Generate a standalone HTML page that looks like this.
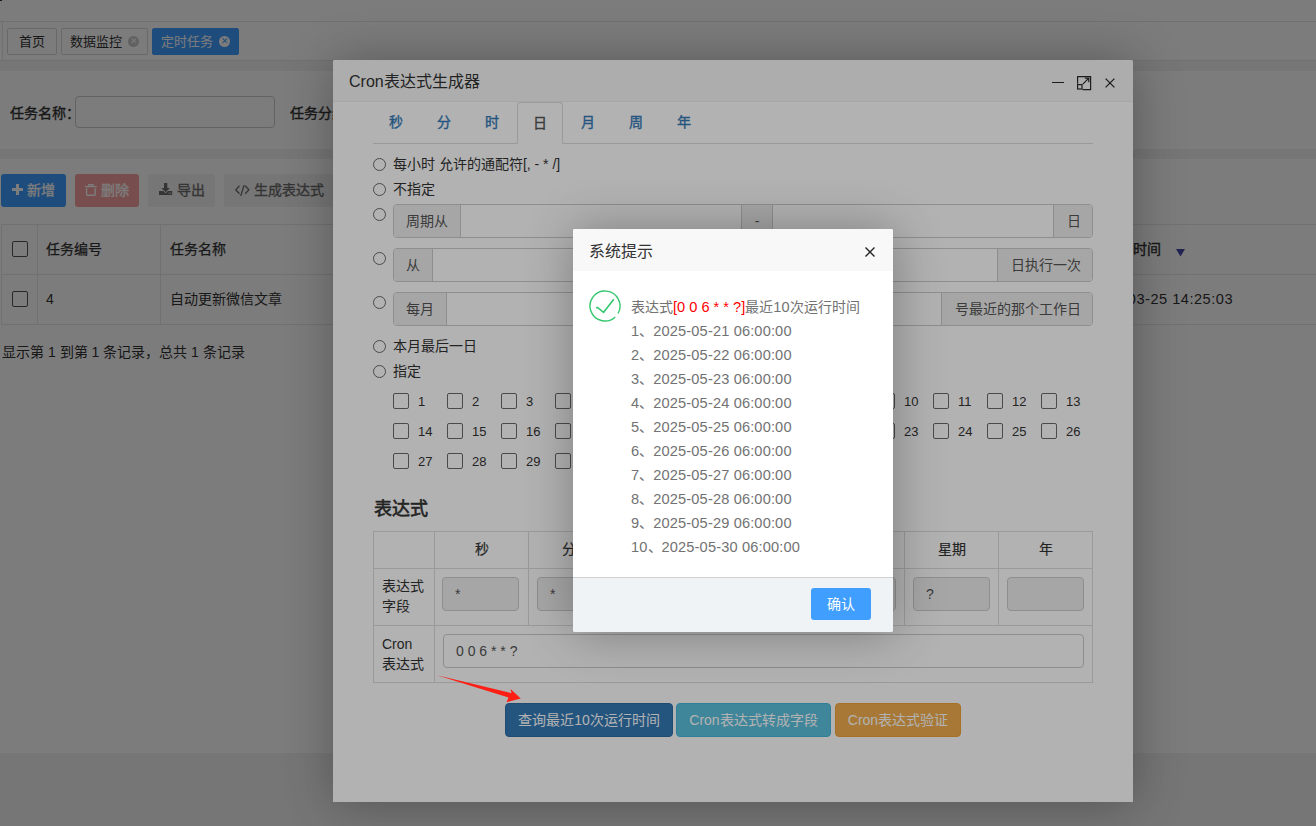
<!DOCTYPE html>
<html lang="zh-CN"><head><meta charset="utf-8">
<style>
*{box-sizing:border-box;margin:0;padding:0}
html,body{width:1316px;height:826px;overflow:hidden}
body{position:relative;font-family:"Liberation Sans",sans-serif;font-size:13px;color:#333;background:#f3f3f4}
.a{position:absolute}
.t{position:absolute;white-space:nowrap;line-height:20px}
/* page */
#top{left:0;top:0;width:1316px;height:21px;background:#fff}
#tabbar{left:0;top:21px;width:1316px;height:40px;background:#fff;border-top:1px solid #e7e7e7;border-bottom:1px solid #e7e7e7}
.tab{position:absolute;top:6px;height:27px;border:1px solid #d9d9d9;border-radius:2px;background:#fff;color:#333;font-size:13px;line-height:25px;padding-left:8px}
.tab.act{background:#409eff;border-color:#409eff;color:#fff}
.xc{position:absolute;top:7px;width:11px;height:11px;border-radius:50%;background:#c8c8c8;color:#fff;font-size:9px;line-height:11px;text-align:center}
.panel{position:absolute;left:0;width:1316px;background:#fff}
.btn{position:absolute;height:33px;border-radius:3px;color:#fff;font-size:14px;line-height:33px;-webkit-text-stroke:.35px currentColor}
.cb{position:absolute;width:16px;height:16px;border:1px solid #555;border-radius:2px;background:#fff}
/* overlays */
.shade{left:0;top:0;width:1316px;height:826px;background:rgba(0,0,0,.3)}
/* modal */
#modal{left:333px;top:60px;width:800px;height:742px;background:#fff;border-radius:2px 2px 0 0;box-shadow:1px 1px 50px rgba(0,0,0,.3)}
#mtitle{left:0;top:0;width:800px;height:42px;background:#f8f8f8;border-bottom:1px solid #f0f0f0;font-size:16px;line-height:42px;padding-left:16px;color:#333;border-radius:2px 2px 0 0}
.mtab{position:absolute;top:42px;height:42px;width:46px;text-align:center;line-height:41px;color:#337ab7;font-size:14px;-webkit-text-stroke:.35px currentColor}
.mtab.act{color:#555;border:1px solid #ddd;border-bottom-color:#fff;border-radius:4px 4px 0 0;background:#fff;height:42px}
.radio{position:absolute;left:40px;width:13px;height:13px;border:1px solid #6a6a6a;border-radius:50%;background:#fff}
.lbl{position:absolute;font-size:14px;color:#333;white-space:nowrap;line-height:20px}
.ig{position:absolute;left:60px;width:700px;height:34px;border:1px solid #ccc;border-radius:4px;background:#fff;overflow:hidden}
.add{position:absolute;top:0;height:32px;background:#eee;line-height:32px;text-align:center;font-size:14px;color:#555}
.ck{position:absolute;width:16px;height:16px;border:1px solid #6a6a6a;border-radius:2px;background:#fff}
.ckl{position:absolute;font-size:13px;color:#333;line-height:20px}
.tl{position:absolute;background:#ddd}
.fi{position:absolute;height:34px;border:1px solid #ccc;border-radius:4px;background:#eee;font-size:14px;color:#555;line-height:32px;padding-left:12px}
.mbtn{position:absolute;top:643px;height:34px;border-radius:4px;color:#fff;font-size:14px;line-height:32px;text-align:center}
/* alert */
#alert{left:573px;top:229px;width:320px;height:403px;background:#fff;border-radius:2px;box-shadow:1px 1px 50px rgba(0,0,0,.3);overflow:hidden}
.dg{font-size:14.6px;letter-spacing:.15px}
.al{position:absolute;left:58px;font-size:14px;color:#727272;line-height:24px;white-space:nowrap}
</style></head><body>
<!-- background page -->
<div class="a" id="top"></div>
<div class="a" style="left:0;top:0;width:2px;height:1px;background:#333"></div>
<div class="a" id="tabbar">
  <div class="a" style="left:2px;top:0;width:1px;height:38px;background:#e7e7e7"></div>
  <div class="tab" style="left:7px;width:50px;padding-left:11px">首页</div>
  <div class="tab" style="left:61px;width:87px">数据监控<span class="xc" style="left:66px">✕</span></div>
  <div class="tab act" style="left:152px;width:87px">定时任务<span class="xc" style="left:66px;background:#fff;color:#409eff">✕</span></div>
</div>
<div class="panel" style="top:71px;height:78px">
  <div class="t" style="left:10px;top:32px;-webkit-text-stroke:.35px currentColor;font-size:14px">任务名称：</div>
  <div class="a" style="left:75px;top:25px;width:200px;height:32px;border:1px solid #ccc;border-radius:4px"></div>
  <div class="t" style="left:290px;top:32px;-webkit-text-stroke:.35px currentColor;font-size:14px">任务分组：</div>
</div>
<div class="panel" style="top:159px;height:594px">
  <div class="btn" style="left:1px;top:15px;width:65px;background:#409eff;padding-left:10px"><svg class="a" style="left:10px;top:9px" width="13" height="13" viewBox="0 0 13 13"><path d="M6.5 1V12M1 6.5H12" stroke="#fff" stroke-width="3"/></svg><span style="position:absolute;left:26px">新增</span></div>
  <div class="btn" style="left:75px;top:15px;width:64px;background:#f89f9f;padding-left:10px"><svg class="a" style="left:10px;top:10px" width="12" height="12" viewBox="0 0 12 12"><path d="M3.8 2V0.7H8V2M0 2.6H11.8" fill="none" stroke="#fff" stroke-width="1.4"/><path d="M1.6 4.2V10.6Q1.6 11.3 2.3 11.3H9.5Q10.2 11.3 10.2 10.6V4.2" fill="none" stroke="#fff" stroke-width="1.4"/></svg><span style="position:absolute;left:26px">删除</span></div>
  <div class="btn" style="left:148px;top:15px;width:67px;background:#f3f3f3;color:#6e6e6e"><svg class="a" style="left:11px;top:9px" width="14" height="12" viewBox="0 0 14 12"><path d="M5 0H8.3V5H10.9L6.65 9.2L2.4 5H5Z" fill="#6e6e6e"/><path d="M0 8H4.4L6.65 10.2L8.9 8H13.2V12H0Z" fill="#6e6e6e"/><rect x="9.6" y="9.6" width="1" height="1" fill="#e8e8e8"/><rect x="11.2" y="9.6" width="1" height="1" fill="#e8e8e8"/></svg><span style="position:absolute;left:29px">导出</span></div>
  <div class="btn" style="left:224px;top:15px;width:130px;background:#f3f3f3;color:#6e6e6e"><svg class="a" style="left:10.5px;top:11px" width="15" height="11" viewBox="0 0 15 11"><path d="M4.5 0.8L0.8 4.8L4.5 8.8M10.2 0.8L13.9 4.8L10.2 8.8M9.2 0L5.7 11" fill="none" stroke="#6e6e6e" stroke-width="1.3"/></svg><span style="position:absolute;left:30px">生成表达式</span></div>
  <div class="a" style="left:1px;top:65px;width:1400px;height:101px;border:1px solid #e7eaec"></div>
  <div class="a" style="left:1px;top:115px;width:1315px;height:1px;background:#e7eaec"></div>
  <div class="a" style="left:37px;top:65px;width:1px;height:101px;background:#e7eaec"></div>
  <div class="a" style="left:160px;top:65px;width:1px;height:101px;background:#e7eaec"></div>
  <div class="cb" style="left:12px;top:82px"></div>
  <div class="cb" style="left:12px;top:132px"></div>
  <div class="t" style="left:46px;top:80px;-webkit-text-stroke:.25px currentColor;font-size:14px">任务编号</div>
  <div class="t" style="left:170px;top:80px;-webkit-text-stroke:.25px currentColor;font-size:14px">任务名称</div>
  <div class="t" style="left:46px;top:130px;font-size:14px">4</div>
  <div class="t" style="left:170px;top:130px;font-size:14px">自动更新微信文章</div>
  <div class="t" style="left:1105px;top:80px;font-size:14px;-webkit-text-stroke:.35px currentColor">创建时间</div><svg class="a" style="left:1176px;top:90px" width="9" height="8" viewBox="0 0 9 8"><path d="M0 0H9L4.5 7.5Z" fill="#4a4aa8"/></svg>
  <div class="t" style="left:1088px;top:130px;font-size:14.6px;letter-spacing:.5px">2025-03-25 14:25:03</div>
  <div class="t" style="left:2px;top:183px;font-size:14px">显示第 1 到第 1 条记录，总共 1 条记录</div>
</div>
<div class="a shade"></div>

<!-- cron modal -->
<div class="a" id="modal">
  <div class="a" id="mtitle" style="line-height:43px">Cron表达式生成器</div>
  <div class="a" style="left:719px;top:22px;width:12px;height:1px;background:#2a2a2a"></div>
  <svg class="a" style="left:743px;top:15px" width="16" height="16" viewBox="0 0 16 16"><path d="M1.6 8.8V1.6H14.6V14.6H6.6" fill="none" stroke="#2a2a2a" stroke-width="1.2"/><rect x="1.6" y="9.6" width="4.4" height="4.4" fill="none" stroke="#2a2a2a" stroke-width="1.2"/><path d="M6.8 9.2L12.6 3.4M8.8 3.2H12.8V7.2" fill="none" stroke="#2a2a2a" stroke-width="1.2"/></svg>
  <svg class="a" style="left:772px;top:18px" width="10" height="10" viewBox="0 0 10 10"><path d="M0.6 0.6L9.4 9.4M9.4 0.6L0.6 9.4" stroke="#2a2a2a" stroke-width="1.3"/></svg>
  <!-- tabs -->
  <div class="a" style="left:40px;top:83px;width:720px;height:1px;background:#ddd"></div>
  <div class="mtab" style="left:40px">秒</div>
  <div class="mtab" style="left:88px">分</div>
  <div class="mtab" style="left:136px">时</div>
  <div class="mtab act" style="left:184px">日</div>
  <div class="mtab" style="left:232px">月</div>
  <div class="mtab" style="left:280px">周</div>
  <div class="mtab" style="left:328px">年</div>
  <!-- radios -->
  <div class="radio" style="top:98px"></div><div class="lbl" style="left:60px;top:94px">每小时 允许的通配符[, - * /]</div>
  <div class="radio" style="top:123px"></div><div class="lbl" style="left:60px;top:119px">不指定</div>
  <div class="radio" style="top:148px"></div>
  <div class="ig" style="top:144px">
    <div class="add" style="left:0;width:67px;border-right:1px solid #ccc">周期从</div>
    <div class="add" style="left:347px;width:32px;border-left:1px solid #ccc;border-right:1px solid #ccc">-</div>
    <div class="add" style="left:659px;width:40px;border-left:1px solid #ccc">日</div>
  </div>
  <div class="radio" style="top:192px"></div>
  <div class="ig" style="top:188px">
    <div class="add" style="left:0;width:39px;border-right:1px solid #ccc">从</div>
    <div class="add" style="left:603px;width:96px;border-left:1px solid #ccc">日执行一次</div>
  </div>
  <div class="radio" style="top:236px"></div>
  <div class="ig" style="top:232px">
    <div class="add" style="left:0;width:53px;border-right:1px solid #ccc">每月</div>
    <div class="add" style="left:547px;width:152px;border-left:1px solid #ccc">号最近的那个工作日</div>
  </div>
  <div class="radio" style="top:280px"></div><div class="lbl" style="left:60px;top:276px">本月最后一日</div>
  <div class="radio" style="top:305px"></div><div class="lbl" style="left:60px;top:301px">指定</div>
  <div class="ck" style="left:60px;top:333px"></div><div class="ckl" style="left:85px;top:332px">1</div><div class="ck" style="left:114px;top:333px"></div><div class="ckl" style="left:139px;top:332px">2</div><div class="ck" style="left:168px;top:333px"></div><div class="ckl" style="left:193px;top:332px">3</div><div class="ck" style="left:222px;top:333px"></div><div class="ckl" style="left:247px;top:332px">4</div><div class="ck" style="left:276px;top:333px"></div><div class="ckl" style="left:301px;top:332px">5</div><div class="ck" style="left:330px;top:333px"></div><div class="ckl" style="left:355px;top:332px">6</div><div class="ck" style="left:384px;top:333px"></div><div class="ckl" style="left:409px;top:332px">7</div><div class="ck" style="left:438px;top:333px"></div><div class="ckl" style="left:463px;top:332px">8</div><div class="ck" style="left:492px;top:333px"></div><div class="ckl" style="left:517px;top:332px">9</div><div class="ck" style="left:546px;top:333px"></div><div class="ckl" style="left:571px;top:332px">10</div><div class="ck" style="left:600px;top:333px"></div><div class="ckl" style="left:625px;top:332px">11</div><div class="ck" style="left:654px;top:333px"></div><div class="ckl" style="left:679px;top:332px">12</div><div class="ck" style="left:708px;top:333px"></div><div class="ckl" style="left:733px;top:332px">13</div><div class="ck" style="left:60px;top:363px"></div><div class="ckl" style="left:85px;top:362px">14</div><div class="ck" style="left:114px;top:363px"></div><div class="ckl" style="left:139px;top:362px">15</div><div class="ck" style="left:168px;top:363px"></div><div class="ckl" style="left:193px;top:362px">16</div><div class="ck" style="left:222px;top:363px"></div><div class="ckl" style="left:247px;top:362px">17</div><div class="ck" style="left:276px;top:363px"></div><div class="ckl" style="left:301px;top:362px">18</div><div class="ck" style="left:330px;top:363px"></div><div class="ckl" style="left:355px;top:362px">19</div><div class="ck" style="left:384px;top:363px"></div><div class="ckl" style="left:409px;top:362px">20</div><div class="ck" style="left:438px;top:363px"></div><div class="ckl" style="left:463px;top:362px">21</div><div class="ck" style="left:492px;top:363px"></div><div class="ckl" style="left:517px;top:362px">22</div><div class="ck" style="left:546px;top:363px"></div><div class="ckl" style="left:571px;top:362px">23</div><div class="ck" style="left:600px;top:363px"></div><div class="ckl" style="left:625px;top:362px">24</div><div class="ck" style="left:654px;top:363px"></div><div class="ckl" style="left:679px;top:362px">25</div><div class="ck" style="left:708px;top:363px"></div><div class="ckl" style="left:733px;top:362px">26</div><div class="ck" style="left:60px;top:393px"></div><div class="ckl" style="left:85px;top:392px">27</div><div class="ck" style="left:114px;top:393px"></div><div class="ckl" style="left:139px;top:392px">28</div><div class="ck" style="left:168px;top:393px"></div><div class="ckl" style="left:193px;top:392px">29</div><div class="ck" style="left:222px;top:393px"></div><div class="ckl" style="left:247px;top:392px">30</div><div class="ck" style="left:276px;top:393px"></div><div class="ckl" style="left:301px;top:392px">31</div>
  <!-- expression -->
  <div class="t" style="left:41px;top:438px;font-size:18px;-webkit-text-stroke:.6px currentColor;line-height:22px">表达式</div>
  <div class="a" style="left:40px;top:471px;width:720px;height:152px;border:1px solid #ddd"></div>
  <div class="tl" style="left:40px;top:508px;width:720px;height:1px"></div>
  <div class="tl" style="left:40px;top:565px;width:720px;height:1px"></div>
  <div class="tl" style="left:101px;top:471px;width:1px;height:152px"></div><div class="t" style="left:102px;width:94px;text-align:center;top:479px;font-size:14px;-webkit-text-stroke:.2px currentColor">秒</div><div class="fi" style="left:109px;top:517px;width:77px">*</div><div class="tl" style="left:195px;top:471px;width:1px;height:94px"></div><div class="t" style="left:196px;width:94px;text-align:center;top:479px;font-size:14px;-webkit-text-stroke:.2px currentColor">分钟</div><div class="fi" style="left:204px;top:517px;width:77px">*</div><div class="tl" style="left:289px;top:471px;width:1px;height:94px"></div><div class="t" style="left:290px;width:94px;text-align:center;top:479px;font-size:14px;-webkit-text-stroke:.2px currentColor">小时</div><div class="fi" style="left:298px;top:517px;width:77px">6</div><div class="tl" style="left:383px;top:471px;width:1px;height:94px"></div><div class="t" style="left:384px;width:94px;text-align:center;top:479px;font-size:14px;-webkit-text-stroke:.2px currentColor">日</div><div class="fi" style="left:392px;top:517px;width:77px">*</div><div class="tl" style="left:477px;top:471px;width:1px;height:94px"></div><div class="t" style="left:478px;width:94px;text-align:center;top:479px;font-size:14px;-webkit-text-stroke:.2px currentColor">月</div><div class="fi" style="left:486px;top:517px;width:77px">*</div><div class="tl" style="left:571px;top:471px;width:1px;height:94px"></div><div class="t" style="left:572px;width:94px;text-align:center;top:479px;font-size:14px;-webkit-text-stroke:.2px currentColor">星期</div><div class="fi" style="left:580px;top:517px;width:77px">?</div><div class="tl" style="left:665px;top:471px;width:1px;height:94px"></div><div class="t" style="left:666px;width:94px;text-align:center;top:479px;font-size:14px;-webkit-text-stroke:.2px currentColor">年</div><div class="fi" style="left:674px;top:517px;width:77px"></div>
  <div class="t" style="left:49px;top:516px;font-size:14px">表达式</div>
  <div class="t" style="left:49px;top:536px;font-size:14px">字段</div>
  <div class="t" style="left:49px;top:574px;font-size:14px">Cron</div>
  <div class="t" style="left:49px;top:594px;font-size:14px">表达式</div>
  <div class="a" style="left:110px;top:574px;width:641px;height:34px;border:1px solid #ccc;border-radius:4px;background:#fff;font-size:14px;color:#555;line-height:32px;padding-left:12px;letter-spacing:0px">0 0 6 * * ?</div>
  <!-- buttons -->
  <div class="mbtn" style="left:172px;width:168px;background:#337ab7;border:1px solid #2e6da4">查询最近10次运行时间</div>
  <div class="mbtn" style="left:343px;width:155px;background:#5bc0de;border:1px solid #46b8da">Cron表达式转成字段</div>
  <div class="mbtn" style="left:502px;width:126px;background:#f0ad4e;border:1px solid #eea236">Cron表达式验证</div>
</div>

<div class="a shade"></div>
<!-- annotation arrow -->
<svg class="a" style="left:0;top:0" width="1316" height="826" viewBox="0 0 1316 826">
  <path d="M437 675.2 L511.5 693.2 L510.5 689 L520.8 698.6 L506.5 702.2 L508.5 697.6 Z" fill="#ff1e14"/>
</svg>
<!-- alert -->
<div class="a" id="alert">
  <div class="a" style="left:0;top:0;width:320px;height:42px;background:#f8f8f8"></div>
  <div class="t" style="left:16px;top:12px;font-size:16px;line-height:22px">系统提示</div>
  <svg class="a" style="left:292px;top:18px" width="10" height="10" viewBox="0 0 10 10"><path d="M0.5 0.5L9.5 9.5M9.5 0.5L0.5 9.5" stroke="#222" stroke-width="1.4"/></svg>
  <svg class="a" style="left:16px;top:61px" width="32" height="32" viewBox="0 0 32 32"><path d="M26.23 26.97A15 15 0 1 1 28.99 23.5" fill="none" stroke="#35c76f" stroke-width="1.4"/><path d="M7.2 18.2L8.4 17.4L14.6 22.3L24.8 9.2" fill="none" stroke="#35c76f" stroke-width="1.6"/></svg>
  <div class="al" style="top:66px">表达式<span class="dg" style="color:#f00;letter-spacing:0">[0 0 6 * * ?]</span>最近<span class="dg">10</span>次运行时间</div>
  <div class="al" style="top:90px"><span class="dg">1</span>、<span class="dg">2025-05-21 06:00:00</span></div>
  <div class="al" style="top:114px"><span class="dg">2</span>、<span class="dg">2025-05-22 06:00:00</span></div>
  <div class="al" style="top:138px"><span class="dg">3</span>、<span class="dg">2025-05-23 06:00:00</span></div>
  <div class="al" style="top:162px"><span class="dg">4</span>、<span class="dg">2025-05-24 06:00:00</span></div>
  <div class="al" style="top:186px"><span class="dg">5</span>、<span class="dg">2025-05-25 06:00:00</span></div>
  <div class="al" style="top:210px"><span class="dg">6</span>、<span class="dg">2025-05-26 06:00:00</span></div>
  <div class="al" style="top:234px"><span class="dg">7</span>、<span class="dg">2025-05-27 06:00:00</span></div>
  <div class="al" style="top:258px"><span class="dg">8</span>、<span class="dg">2025-05-28 06:00:00</span></div>
  <div class="al" style="top:282px"><span class="dg">9</span>、<span class="dg">2025-05-29 06:00:00</span></div>
  <div class="al" style="top:306px"><span class="dg">10</span>、<span class="dg">2025-05-30 06:00:00</span></div>
  <div class="a" style="left:0;top:348px;width:320px;height:55px;background:#eff3f6;border-top:1px solid #d0d0d0"></div>
  <div class="a" style="left:238px;top:359px;width:60px;height:32px;background:#409eff;border-radius:3px;color:#fff;font-size:14px;line-height:32px;text-align:center">确认</div>
</div>
</body></html>
